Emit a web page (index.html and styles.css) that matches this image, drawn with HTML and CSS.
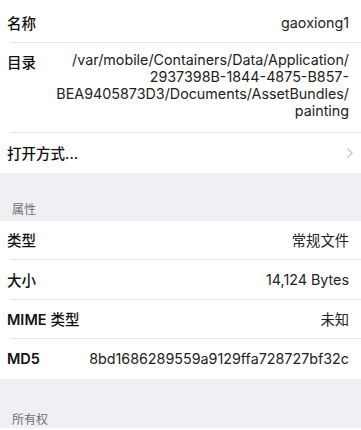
FILE: index.html
```html
<!DOCTYPE html>
<html>
<head>
<meta charset="utf-8">
<link rel="stylesheet" href="styles.css">
</head>
<body>
<div class="page">
  <div class="group">
    <div class="row first">
      <div class="label">名称</div>
      <div class="value">gaoxiong1</div>
    </div>
    <div class="row tall">
      <div class="label">目录</div>
      <div class="value path">/var/mobile/Containers/Data/Application/<br>2937398B-1844-4875-B857-<br>BEA9405873D3/Documents/AssetBundles/<br>painting</div>
    </div>
    <div class="row last">
      <div class="label">打开方式...</div>
      <svg class="chevron" width="8" height="12" viewBox="0 0 8 12"><path d="M1.5 1.5 L6 6 L1.5 10.5" fill="none" stroke="#c4c4c9" stroke-width="1.4"/></svg>
    </div>
  </div>
  <div class="header">属性</div>
  <div class="group">
    <div class="row">
      <div class="label">类型</div>
      <div class="value">常规文件</div>
    </div>
    <div class="row">
      <div class="label">大小</div>
      <div class="value">14,124 Bytes</div>
    </div>
    <div class="row">
      <div class="label"><span class="latin">MIME</span> 类型</div>
      <div class="value">未知</div>
    </div>
    <div class="row last">
      <div class="label"><span class="latin">MD5</span></div>
      <div class="value">8bd1686289559a9129ffa728727bf32c</div>
    </div>
  </div>
  <div class="header second">所有权</div>
  <div class="group stub"></div>
</div>
</body>
</html>
```
FILE: styles.css
```css
html, body {
  margin: 0;
  padding: 0;
  background: #efeff4;
}
.page {
  width: 361px;
  height: 430px;
  overflow: hidden;
  font-family: "Inter", "Noto Sans CJK SC", sans-serif;
  -webkit-font-smoothing: antialiased;
}
.group {
  background: #fff;
  padding-left: 10px;
}
.row {
  display: flex;
  justify-content: space-between;
  align-items: center;
  height: 39.5px;
  padding-right: 12px;
  border-bottom: 1px solid #e6e6e8;
  box-sizing: border-box;
}
.row.first {
  height: 43px;
  padding-top: 2px;
}
.row.tall {
  height: 90px;
  align-items: flex-start;
  padding-top: 8px;
}
.row.last {
  border-bottom: none;
}
.label {
  margin-left: -3px;
  font-size: 14.5px;
  font-weight: 500;
  color: #111;
  white-space: nowrap;
}
.latin {
  font-weight: 600;
}
.value {
  font-size: 14.3px;
  color: #222;
  text-align: right;
  white-space: nowrap;
}
.value.path {
  line-height: 17px;
}
.chevron {
  margin-right: -5px;
}
.header {
  height: 48px;
  box-sizing: border-box;
  padding: 27px 0 0 12px;
  font-size: 12px;
  color: #707074;
  font-family: "Noto Sans CJK SC", sans-serif;
}
.header.second {
  height: 49px;
  padding-top: 31px;
}
.group.stub {
  height: 10px;
}
```
